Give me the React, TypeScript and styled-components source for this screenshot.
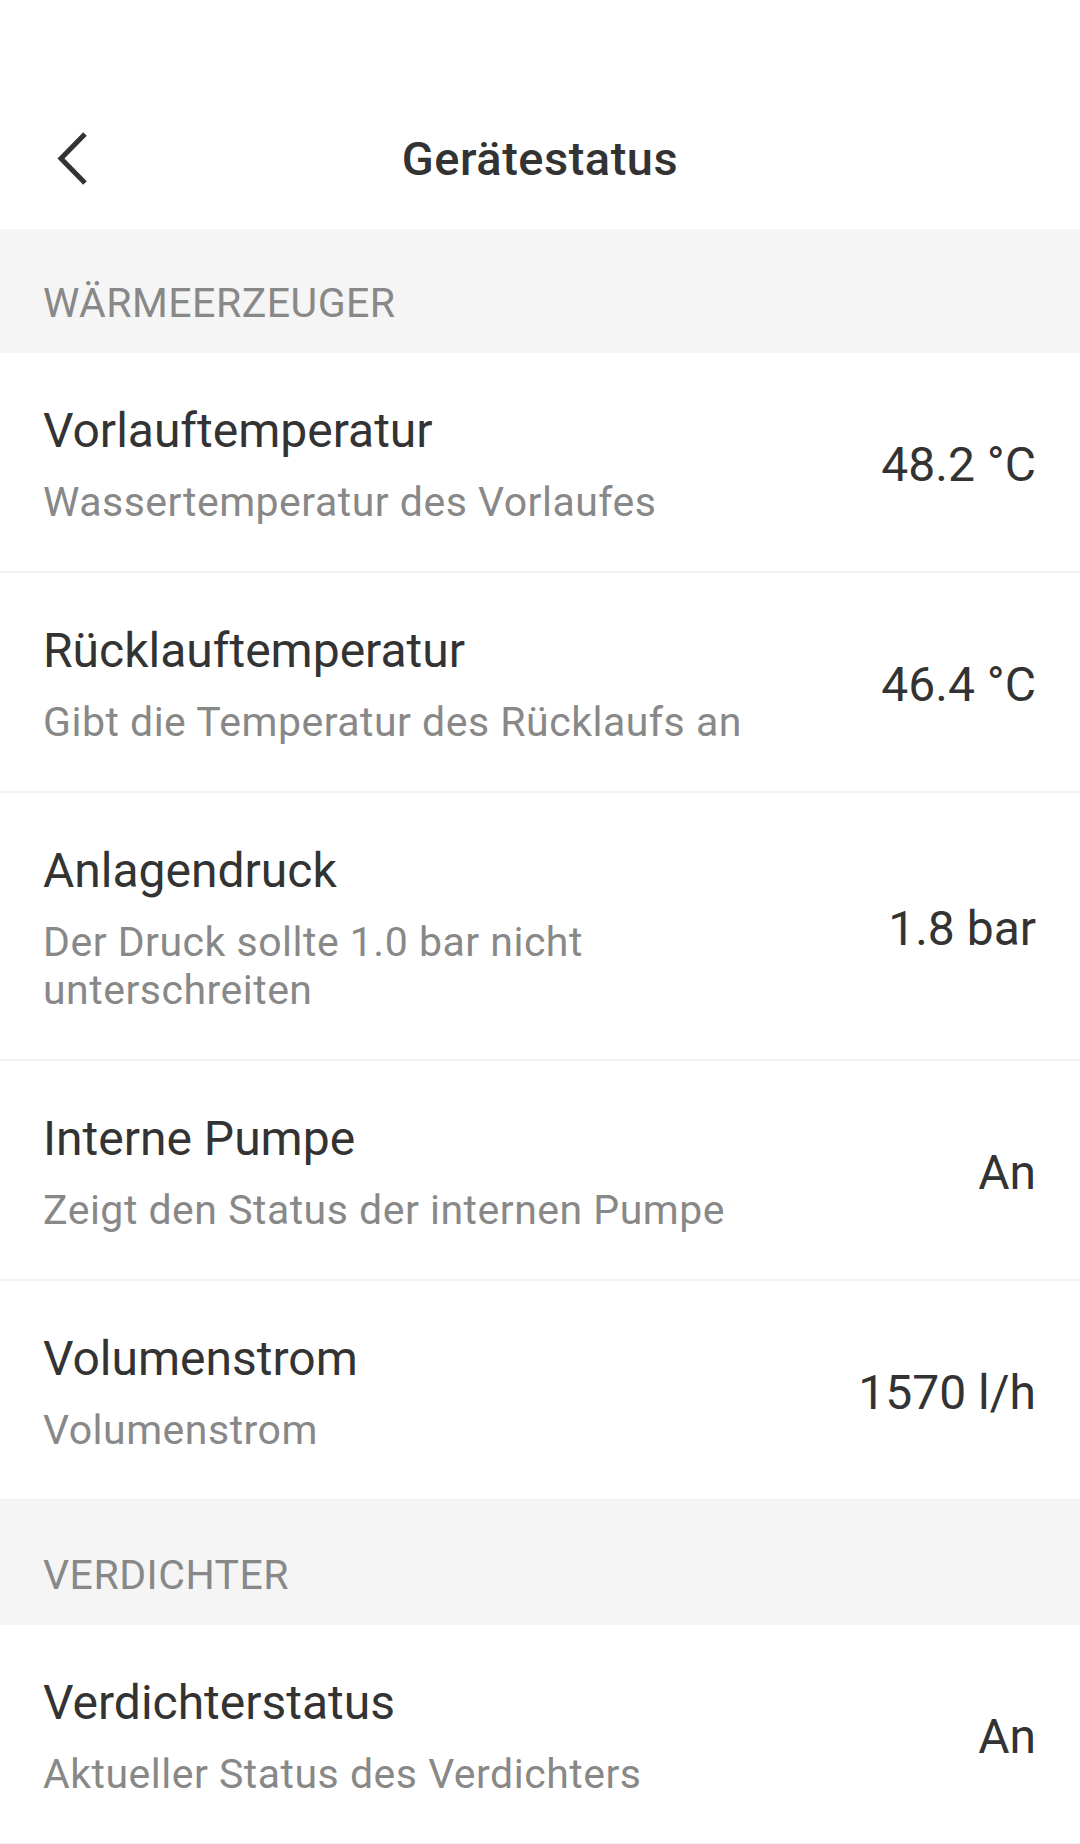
import styled, { createGlobalStyle } from "styled-components";

const GlobalStyle = createGlobalStyle`
  html, body {
    margin: 0;
    padding: 0;
    background: #ffffff;
    font-family: Roboto, "Liberation Sans", sans-serif;
  }
  * {
    box-sizing: border-box;
  }
`;

const Page = styled.div`
  width: 1080px;
  min-height: 1844px;
  background: #ffffff;
  display: flex;
  flex-direction: column;
`;

const Header = styled.header`
  padding-top: 90px;
  background: #ffffff;
`;

const NavBar = styled.div`
  height: 139px;
  display: grid;
  grid-template-columns: 1fr auto 1fr;
  align-items: center;
`;

const BackButton = styled.button`
  justify-self: start;
  margin-left: 52px;
  width: 40px;
  height: 60px;
  padding: 0;
  border: none;
  background: transparent;
  display: flex;
  cursor: pointer;
`;

const Title = styled.h1`
  margin: 0;
  font-size: 47px;
  font-weight: 500;
  letter-spacing: 0.5px;
  color: #333333;
  line-height: 1.2;
`;

const SectionHeader = styled.div`
  background: #f5f5f5;
  padding: 50px 43px 26px;
  font-size: 41px;
  letter-spacing: 0.5px;
  line-height: 48px;
  color: #888888;
  text-transform: uppercase;
`;

const Row = styled.div`
  display: flex;
  align-items: center;
  justify-content: space-between;
  padding: 50px 44px 45px 43px;
  border-bottom: 2px solid #f2f2f2;
`;

const Info = styled.div`
  flex: 1;
  max-width: 760px;
  display: flex;
  flex-direction: column;
  gap: 19px;
`;

const Label = styled.div`
  font-size: 48px;
  line-height: 56px;
  color: #333333;
`;

const Hint = styled.div`
  font-size: 41px;
  letter-spacing: 0.5px;
  line-height: 48px;
  color: #888888;
`;

const Value = styled.div`
  font-size: 48px;
  line-height: 56px;
  color: #333333;
  white-space: nowrap;
`;

type Item = { label: string; hint: string; value: string };

const sections: { title: string; items: Item[] }[] = [
  {
    title: "Wärmeerzeuger",
    items: [
      { label: "Vorlauftemperatur", hint: "Wassertemperatur des Vorlaufes", value: "48.2 °C" },
      { label: "Rücklauftemperatur", hint: "Gibt die Temperatur des Rücklaufs an", value: "46.4 °C" },
      { label: "Anlagendruck", hint: "Der Druck sollte 1.0 bar nicht unterschreiten", value: "1.8 bar" },
      { label: "Interne Pumpe", hint: "Zeigt den Status der internen Pumpe", value: "An" },
      { label: "Volumenstrom", hint: "Volumenstrom", value: "1570 l/h" },
    ],
  },
  {
    title: "Verdichter",
    items: [
      { label: "Verdichterstatus", hint: "Aktueller Status des Verdichters", value: "An" },
    ],
  },
];

function BackIcon() {
  return (
    <svg width="40" height="60" viewBox="0 0 40 60">
      <polyline
        points="33,4 9,28.5 33,53"
        fill="none"
        stroke="#333333"
        strokeWidth="5"
      />
    </svg>
  );
}

export default function App() {
  return (
    <Page>
      <GlobalStyle />
      <Header>
        <NavBar>
          <BackButton aria-label="Zurück">
            <BackIcon />
          </BackButton>
          <Title>Gerätestatus</Title>
          <div />
        </NavBar>
      </Header>
      {sections.map((s) => (
        <section key={s.title}>
          <SectionHeader>{s.title}</SectionHeader>
          {s.items.map((it) => (
            <Row key={it.label}>
              <Info>
                <Label>{it.label}</Label>
                <Hint>{it.hint}</Hint>
              </Info>
              <Value>{it.value}</Value>
            </Row>
          ))}
        </section>
      ))}
    </Page>
  );
}
